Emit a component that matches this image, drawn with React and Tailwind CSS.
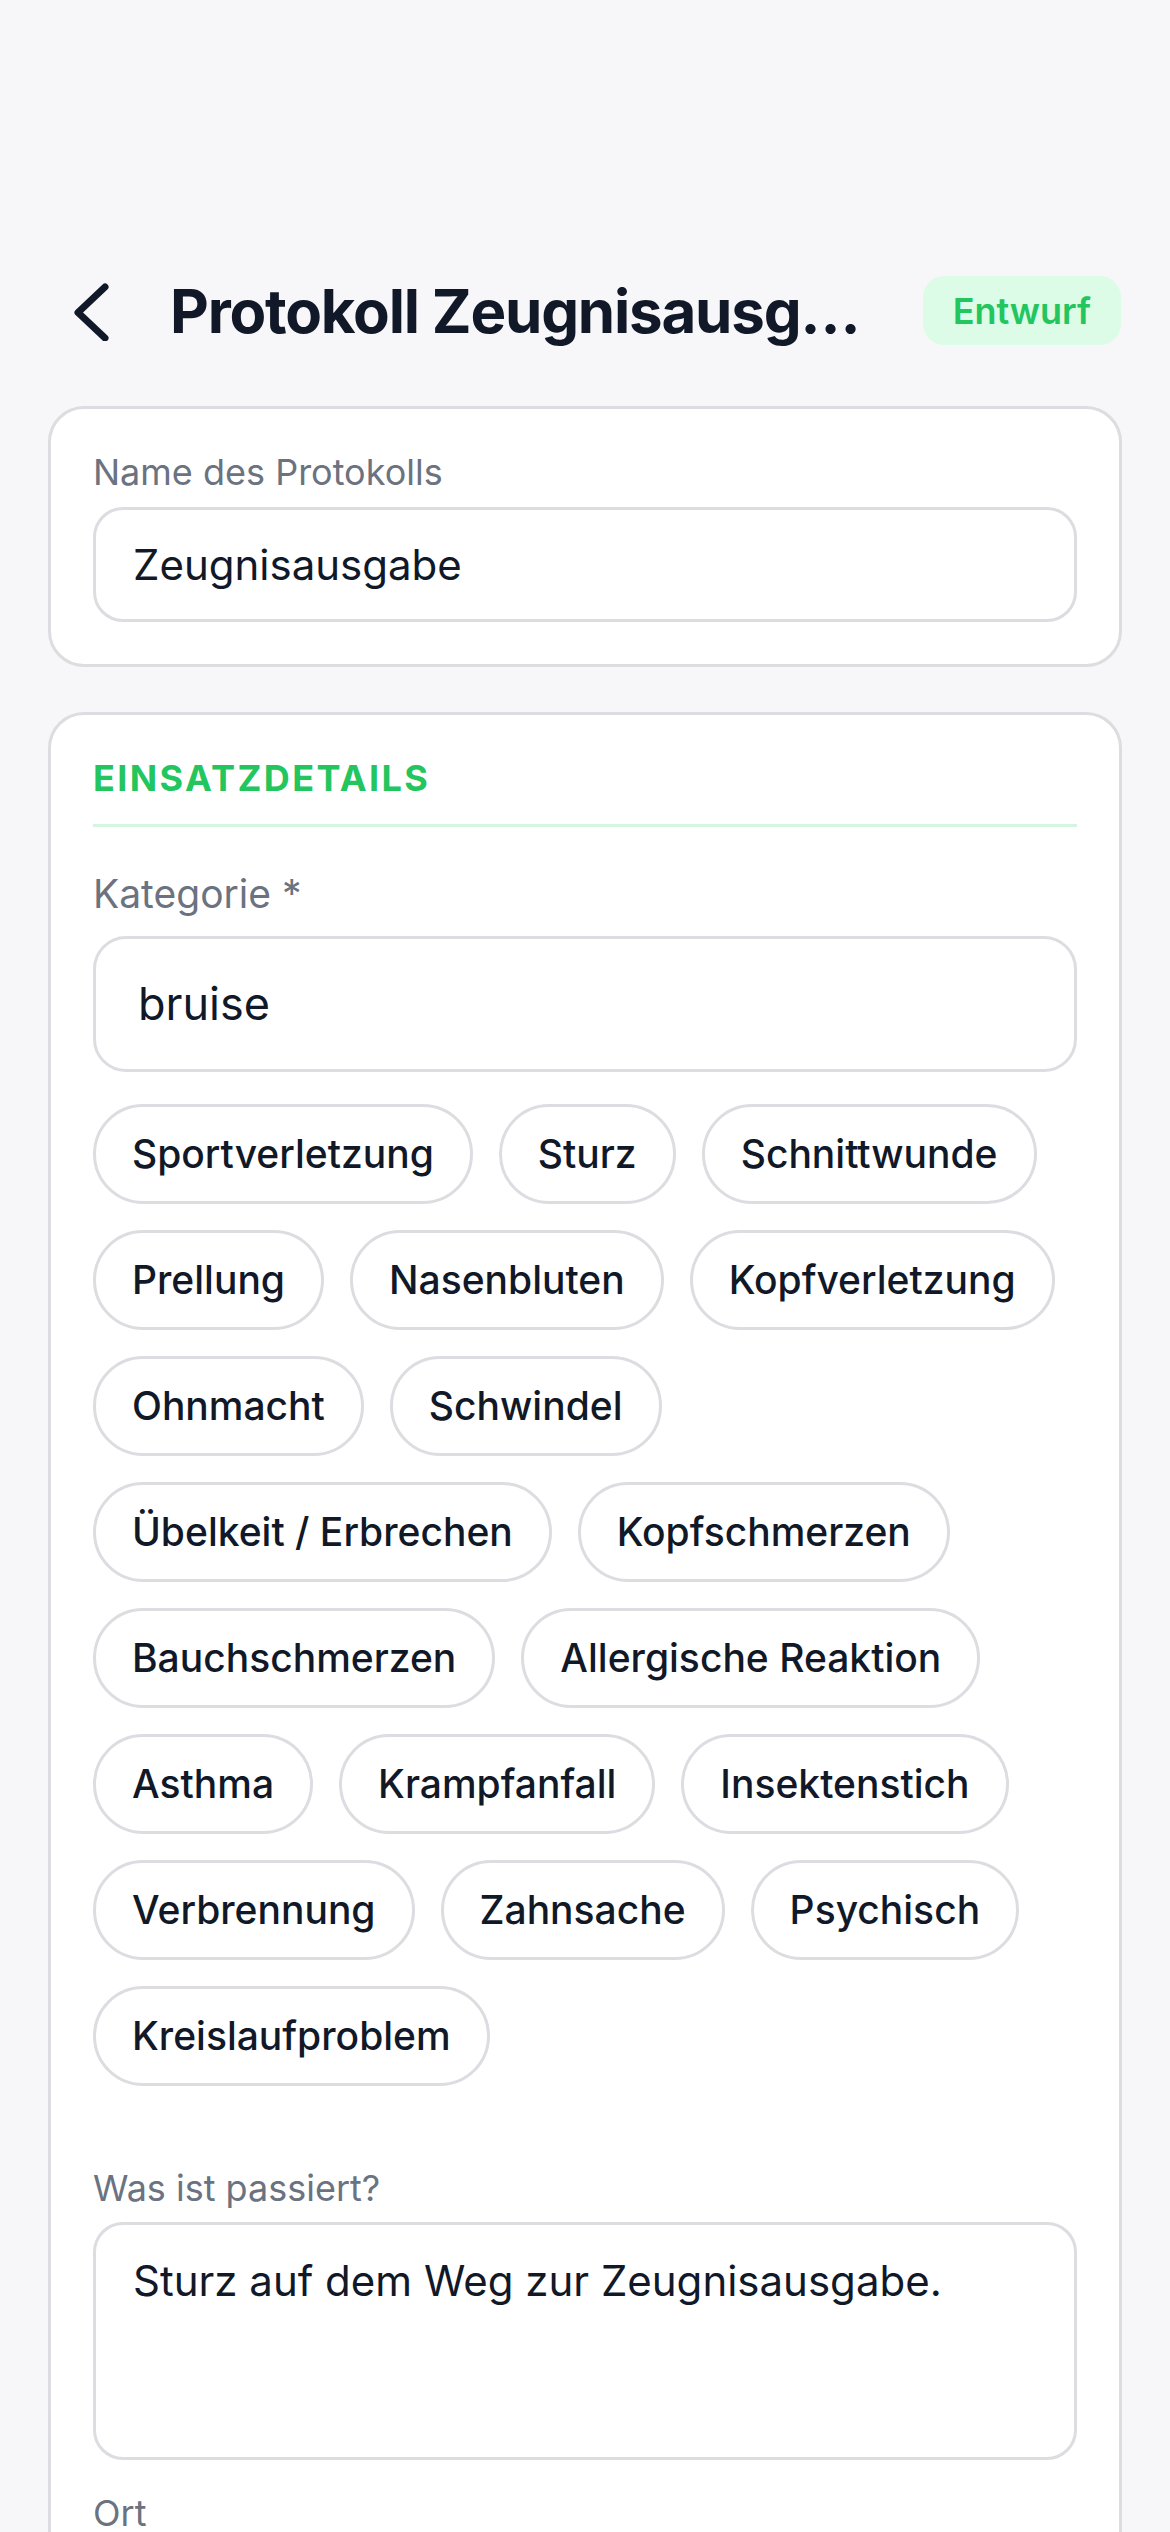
import React from "react";

const categories = [
  "Sportverletzung",
  "Sturz",
  "Schnittwunde",
  "Prellung",
  "Nasenbluten",
  "Kopfverletzung",
  "Ohnmacht",
  "Schwindel",
  "Übelkeit / Erbrechen",
  "Kopfschmerzen",
  "Bauchschmerzen",
  "Allergische Reaktion",
  "Asthma",
  "Krampfanfall",
  "Insektenstich",
  "Verbrennung",
  "Zahnsache",
  "Psychisch",
  "Kreislaufproblem",
];

const App = () => {
  return (
    <div className="min-h-[2532px] bg-[#f7f7f9] font-['Inter',sans-serif] text-[#111827] overflow-hidden">
      {/* header */}
      <div className="flex items-center h-[69px] mt-[276px] pl-[72px] pr-[49px]">
        <svg width="40" height="60" viewBox="0 0 40 60" fill="none" className="shrink-0">
          <path
            d="M33 6 L6 31.5 L33 57"
            stroke="#111827"
            strokeWidth="7"
            strokeLinecap="round"
            strokeLinejoin="round"
          />
        </svg>
        <h1 className="ml-[58px] flex-1 min-w-0 truncate text-[60px] leading-[72px] font-bold tracking-[-1.2px]">
          Protokoll Zeugnisausgabe
        </h1>
        <span className="ml-[40px] shrink-0 h-[69px] px-[30px] flex items-center rounded-[21px] bg-[#dcfce7] text-[#22c55e] text-[36px] font-semibold">
          Entwurf
        </span>
      </div>

      <div className="px-[48px] mt-[61px] flex flex-col gap-[45px]">
        {/* name card */}
        <div className="bg-white border-[3px] border-[#dcdce1] rounded-[36px] p-[42px]">
          <label className="block text-[36px] leading-[1.2] text-[#6b7280] mb-[13px]">
            Name des Protokolls
          </label>
          <div className="h-[115px] border-[3px] border-[#dcdce1] rounded-[30px] pl-[37px] flex items-center text-[42px]">
            Zeugnisausgabe
          </div>
        </div>

        {/* details card */}
        <div className="bg-white border-[3px] border-[#dcdce1] rounded-[36px] p-[42px] pb-[200px]">
          <h2 className="text-[36px] leading-[1.2] font-bold tracking-[2.4px] text-[#22c55e] uppercase pb-[24px] border-b-[3px] border-[#d5f5e2]">
            Einsatzdetails
          </h2>

          <label className="block mt-[44px] text-[39px] leading-[1.2] text-[#6b7280] mb-[18px]">
            Kategorie *
          </label>
          <div className="h-[136px] border-[3px] border-[#dcdce1] rounded-[33px] pl-[42px] flex items-center text-[45px]">
            bruise
          </div>

          <div className="flex flex-wrap gap-[26px] mt-[32px]">
            {categories.map((c) => (
              <button
                key={c}
                className="h-[100px] px-[36px] border-[3px] border-[#dcdce1] rounded-full text-[39px] font-medium bg-white"
              >
                {c}
              </button>
            ))}
          </div>

          <label className="block mt-[81px] text-[36px] leading-[1.2] text-[#6b7280] mb-[12px]">
            Was ist passiert?
          </label>
          <div className="h-[238px] border-[3px] border-[#dcdce1] rounded-[30px] px-[37px] pt-[31px] text-[42px] leading-[1.2]">
            Sturz auf dem Weg zur Zeugnisausgabe.
          </div>

          <label className="block mt-[32px] text-[36px] leading-[1.2] text-[#6b7280]">
            Ort
          </label>
        </div>
      </div>
    </div>
  );
};

export default App;
